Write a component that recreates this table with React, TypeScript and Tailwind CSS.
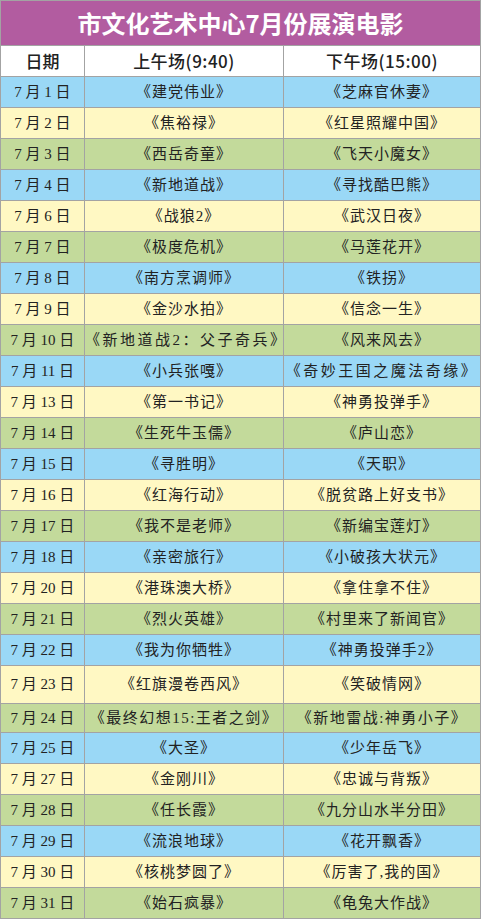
const rows: [string, string, string, string?, string?][] = [
  ["1", "建党伟业", "芝麻官休妻"],
  ["2", "焦裕禄", "红星照耀中国"],
  ["3", "西岳奇童", "飞天小魔女"],
  ["4", "新地道战", "寻找酷巴熊"],
  ["6", "战狼2", "武汉日夜"],
  ["7", "极度危机", "马莲花开"],
  ["8", "南方烹调师", "铁拐"],
  ["9", "金沙水拍", "信念一生"],
  ["10", "新地道战2：父子奇兵", "风来风去", "tracking-[2.5px]"],
  ["11", "小兵张嘎", "奇妙王国之魔法奇缘", undefined, "tracking-[2.5px]"],
  ["13", "第一书记", "神勇投弹手"],
  ["14", "生死牛玉儒", "庐山恋"],
  ["15", "寻胜明", "天职"],
  ["16", "红海行动", "脱贫路上好支书"],
  ["17", "我不是老师", "新编宝莲灯"],
  ["18", "亲密旅行", "小破孩大状元"],
  ["20", "港珠澳大桥", "拿住拿不住"],
  ["21", "烈火英雄", "村里来了新闻官"],
  ["22", "我为你牺牲", "神勇投弹手2"],
  ["23", "红旗漫卷西风", "笑破情网"],
  ["24", "最终幻想15:王者之剑", "新地雷战:神勇小子", "tracking-[1.5px]", "tracking-[1.5px]"],
  ["25", "大圣", "少年岳飞"],
  ["27", "金刚川", "忠诚与背叛"],
  ["28", "任长霞", "九分山水半分田"],
  ["29", "流浪地球", "花开飘香"],
  ["30", "核桃梦圆了", "厉害了,我的国"],
  ["31", "始石疯暴", "龟兔大作战"],
];

const bgs = ["bg-[#9ad8f6]", "bg-[#fff8c3]", "bg-[#c3da9b]"];

const serif = { fontFamily: "'Liberation Serif', 'Noto Sans CJK SC', serif" };
const sans = { fontFamily: "'Noto Sans CJK SC', 'Noto Sans', sans-serif" };

export default function App() {
  return (
    <div className="w-[482px] bg-white pb-[2px]">
      <table className="w-[481px] border-collapse table-fixed text-[#222]">
        <colgroup>
          <col className="w-[84px]" />
          <col className="w-[199px]" />
          <col />
        </colgroup>
        <thead>
          <tr className="h-[45px]">
            <th
              colSpan={3}
              className="border border-[#a3a3a3] bg-[#b25ca0] text-white text-[24px] font-bold text-center"
              style={sans}
            >
              市文化艺术中心7月份展演电影
            </th>
          </tr>
          <tr className="h-[31px] bg-white text-[17px]" style={sans}>
            <th className="border border-[#a3a3a3] font-medium">日期</th>
            <th className="border border-[#a3a3a3] font-medium tracking-[0.5px]">上午场(9:40)</th>
            <th className="border border-[#a3a3a3] font-medium tracking-[0.5px]">下午场(15:00)</th>
          </tr>
        </thead>
        <tbody style={serif}>
          {rows.map(([d, am, pm, amT, pmT], i) => (
            <tr
              key={d}
              className={`${bgs[i % 3]} ${d === "23" ? "h-[38px]" : d === "24" ? "h-[29px]" : "h-[31px]"}`}
            >
              <td className="border border-[#a3a3a3] text-center text-[15px] whitespace-pre">
                {`7 月 ${d} 日`}
              </td>
              <td
                className={`border border-[#a3a3a3] text-center text-[15px] whitespace-nowrap ${amT ?? "tracking-[1px]"}`}
              >
                《{am}》
              </td>
              <td
                className={`border border-[#a3a3a3] text-center text-[15px] whitespace-nowrap ${pmT ?? "tracking-[1px]"}`}
              >
                《{pm}》
              </td>
            </tr>
          ))}
        </tbody>
      </table>
    </div>
  );
}
